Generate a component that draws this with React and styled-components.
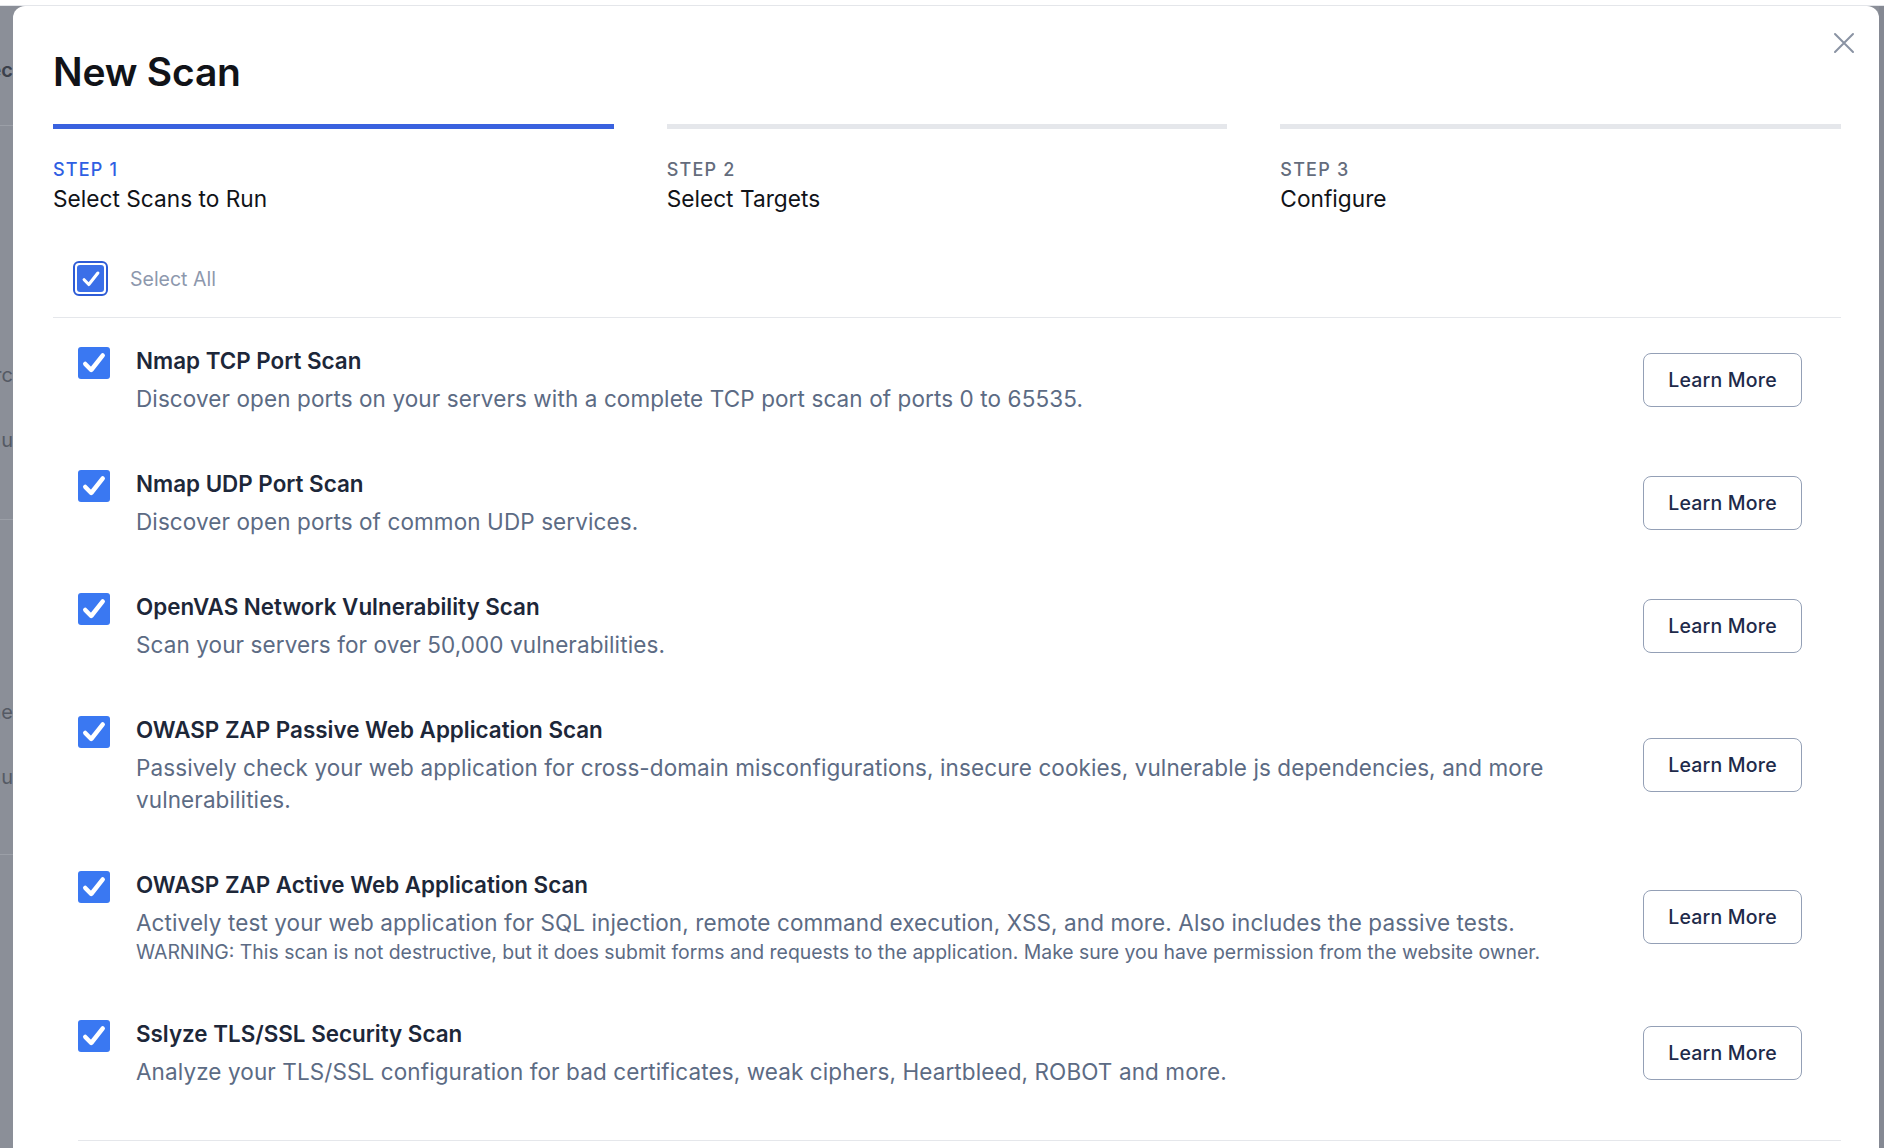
import React from "react";
import styled, { createGlobalStyle } from "styled-components";

const GlobalStyle = createGlobalStyle`
  html, body {
    margin: 0;
    padding: 0;
    background: #ffffff;
  }
  body {
    font-family: Inter, "Noto Sans", "Liberation Sans", sans-serif;
    -webkit-font-smoothing: antialiased;
  }
  * {
    box-sizing: border-box;
  }
`;

const Page = styled.div`
  height: 1148px;
  overflow: hidden;
  display: flex;
  flex-direction: column;
`;

const TopStrip = styled.div`
  height: 6px;
  flex-shrink: 0;
  background: #ffffff;
  border-bottom: 1px solid #e4e6ea;
`;

const Backdrop = styled.div`
  flex: 1;
  display: flex;
  background: #8b8f98;
  min-height: 0;
`;

const Sliver = styled.div`
  width: 13px;
  flex-shrink: 0;
  overflow: hidden;
  display: flex;
  flex-direction: column;
`;

const SliverBlock = styled.div`
  height: ${(p) => p.$h}px;
  padding-top: ${(p) => p.$pad || 0}px;
  border-bottom: ${(p) => (p.$line ? "1px solid #9b9fa7" : "none")};
  display: flex;
  flex-direction: column;
  gap: ${(p) => p.$gap || 0}px;
`;

const Ghost = styled.div`
  display: flex;
  justify-content: flex-end;
  white-space: nowrap;
  font-size: 20px;
  line-height: 24px;
  color: ${(p) => (p.$dark ? "#3c414b" : "#555a64")};
  font-weight: ${(p) => (p.$dark ? 600 : 400)};
`;

const RightSliver = styled.div`
  width: 5px;
  flex-shrink: 0;
  background: #858993;
`;

const Modal = styled.div`
  position: relative;
  flex: 1;
  background: #ffffff;
  border-radius: 12px 12px 0 0;
  padding: 43px 38px 0 40px;
`;

const CloseButton = styled.button`
  position: absolute;
  top: 25px;
  right: 23px;
  width: 24px;
  height: 24px;
  padding: 0;
  border: none;
  background: transparent;
  display: flex;
  align-items: center;
  justify-content: center;
  cursor: pointer;
`;

const Title = styled.h1`
  margin: 0;
  font-size: 39px;
  line-height: 46px;
  font-weight: 600;
  color: #111318;
  letter-spacing: -0.2px;
`;

const Steps = styled.div`
  display: grid;
  grid-template-columns: repeat(3, 1fr);
  column-gap: 53px;
  margin-top: 29px;
`;

const Step = styled.div`
  display: flex;
  flex-direction: column;
`;

const StepBar = styled.div`
  height: 5px;
  background: ${(p) => (p.$active ? "#3a62df" : "#e5e7eb")};
`;

const StepLabel = styled.div`
  margin-top: 31px;
  font-size: 18px;
  line-height: 20px;
  font-weight: 500;
  letter-spacing: 1.2px;
  color: ${(p) => (p.$active ? "#2f5fe3" : "#646c7c")};
`;

const StepName = styled.div`
  margin-top: 5px;
  font-size: 22.7px;
  line-height: 28px;
  color: #111318;
`;

const SelectAllRow = styled.div`
  display: flex;
  align-items: center;
  gap: 22px;
  margin-top: 48px;
  padding: 0 0 21px 20px;
  border-bottom: 1px solid #e5e7eb;
`;

const RingBox = styled.span`
  width: 35px;
  height: 35px;
  border: 2px solid #2d5bd6;
  border-radius: 6px;
  display: flex;
  align-items: center;
  justify-content: center;
  background: #ffffff;
`;

const Box = styled.span`
  width: ${(p) => p.$size}px;
  height: ${(p) => p.$size}px;
  border-radius: ${(p) => p.$radius}px;
  background: ${(p) => p.$color};
  display: flex;
  align-items: center;
  justify-content: center;
  flex-shrink: 0;
`;

const SelectAllText = styled.span`
  font-size: 19.5px;
  line-height: 24px;
  color: #8d98ad;
`;

const List = styled.div`
  margin-left: 25px;
  padding-bottom: 26px;
  border-bottom: 1px solid #e5e7eb;
`;

const Row = styled.div`
  display: flex;
  align-items: center;
  padding: 27px 39px 26px 0;
`;

const RowMain = styled.div`
  flex: 1;
  display: flex;
  align-items: flex-start;
  gap: 26px;
  min-width: 0;
`;

const CheckWrap = styled.div`
  margin-top: 2px;
`;

const RowText = styled.div`
  flex: 1;
  max-width: 1440px;
`;

const ScanTitle = styled.div`
  font-size: 22.4px;
  line-height: 32px;
  font-weight: 600;
  color: #1d2739;
`;

const ScanDesc = styled.div`
  margin-top: 6px;
  font-size: 22.5px;
  line-height: 32px;
  letter-spacing: 0.1px;
  color: #5c6b84;
`;

const ScanWarning = styled.div`
  font-size: 19.4px;
  line-height: 26px;
  color: #5c6b84;
`;

const LearnButton = styled.button`
  width: 159px;
  height: 54px;
  flex-shrink: 0;
  margin-left: 40px;
  border: 1.5px solid #94a0b6;
  border-radius: 8px;
  background: #ffffff;
  font-family: inherit;
  font-size: 19.5px;
  font-weight: 450;
  color: #1e2a4a;
  letter-spacing: 0.2px;
  cursor: pointer;
`;

function CheckMark({ size, width = 3.6 }) {
  return (
    <svg width={size} height={size} viewBox="0 0 24 24" fill="none">
      <path
        d="M4.5 12.8 L9.6 18 L19.5 5.5"
        stroke="#ffffff"
        strokeWidth={width}
        strokeLinecap="round"
        strokeLinejoin="round"
      />
    </svg>
  );
}

function CloseIcon() {
  return (
    <svg width="22" height="22" viewBox="0 0 22 22" fill="none">
      <path d="M2 2 L20 20 M20 2 L2 20" stroke="#8a93a3" strokeWidth="2" strokeLinecap="round" />
    </svg>
  );
}

const steps = [
  { label: "STEP 1", name: "Select Scans to Run", active: true },
  { label: "STEP 2", name: "Select Targets" },
  { label: "STEP 3", name: "Configure" },
];

const scans = [
  {
    title: "Nmap TCP Port Scan",
    desc: "Discover open ports on your servers with a complete TCP port scan of ports 0 to 65535.",
  },
  {
    title: "Nmap UDP Port Scan",
    desc: "Discover open ports of common UDP services.",
  },
  {
    title: "OpenVAS Network Vulnerability Scan",
    desc: "Scan your servers for over 50,000 vulnerabilities.",
  },
  {
    title: "OWASP ZAP Passive Web Application Scan",
    desc: "Passively check your web application for cross-domain misconfigurations, insecure cookies, vulnerable js dependencies, and more vulnerabilities.",
  },
  {
    title: "OWASP ZAP Active Web Application Scan",
    desc: "Actively test your web application for SQL injection, remote command execution, XSS, and more. Also includes the passive tests.",
    warning:
      "WARNING: This scan is not destructive, but it does submit forms and requests to the application. Make sure you have permission from the website owner.",
  },
  {
    title: "Sslyze TLS/SSL Security Scan",
    desc: "Analyze your TLS/SSL configuration for bad certificates, weak ciphers, Heartbleed, ROBOT and more.",
  },
];

export default function App() {
  return (
    <>
      <GlobalStyle />
      <Page>
        <TopStrip />
        <Backdrop>
          <Sliver>
            <SliverBlock $h={120} $pad={52} $line>
              <Ghost $dark>Selec</Ghost>
            </SliverBlock>
            <SliverBlock $h={394} $pad={237} $gap={41} $line>
              <Ghost>Sourc</Ghost>
              <Ghost>Menu</Ghost>
            </SliverBlock>
            <SliverBlock $h={335} $pad={180} $gap={41} $line>
              <Ghost>Name</Ghost>
              <Ghost>Menu</Ghost>
            </SliverBlock>
          </Sliver>
          <Modal>
            <CloseButton aria-label="Close">
              <CloseIcon />
            </CloseButton>
            <Title>New Scan</Title>
            <Steps>
              {steps.map((s) => (
                <Step key={s.label}>
                  <StepBar $active={s.active} />
                  <StepLabel $active={s.active}>{s.label}</StepLabel>
                  <StepName>{s.name}</StepName>
                </Step>
              ))}
            </Steps>
            <SelectAllRow>
              <RingBox>
                <Box $size={27} $radius={3} $color="#3b6fe8">
                  <CheckMark size={22} width={3.4} />
                </Box>
              </RingBox>
              <SelectAllText>Select All</SelectAllText>
            </SelectAllRow>
            <List>
              {scans.map((s) => (
                <Row key={s.title}>
                  <RowMain>
                    <CheckWrap>
                      <Box $size={32} $radius={3} $color="#3a78f2">
                        <CheckMark size={28} width={3.8} />
                      </Box>
                    </CheckWrap>
                    <RowText>
                      <ScanTitle>{s.title}</ScanTitle>
                      <ScanDesc>{s.desc}</ScanDesc>
                      {s.warning && <ScanWarning>{s.warning}</ScanWarning>}
                    </RowText>
                  </RowMain>
                  <LearnButton>Learn More</LearnButton>
                </Row>
              ))}
            </List>
          </Modal>
          <RightSliver />
        </Backdrop>
      </Page>
    </>
  );
}
